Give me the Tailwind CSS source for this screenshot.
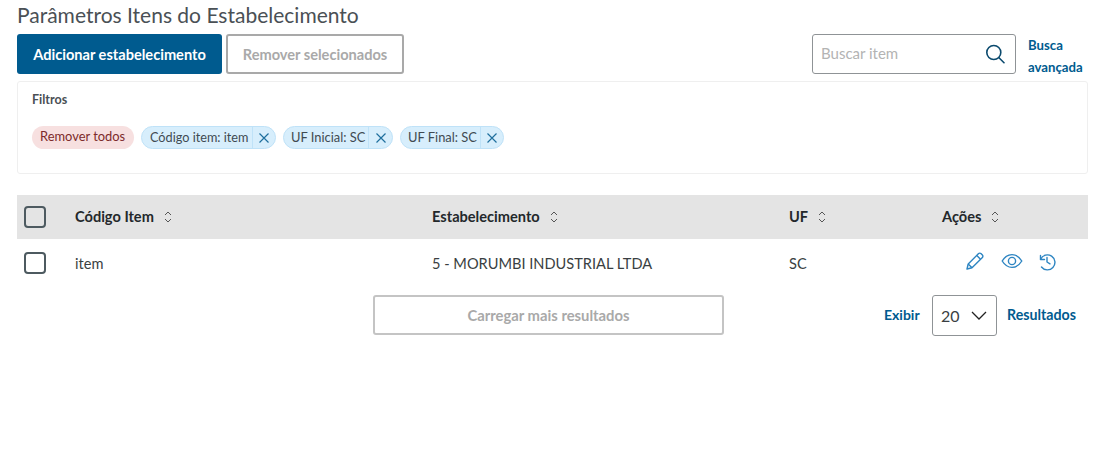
<!DOCTYPE html>
<html lang="pt-BR">
<head>
<meta charset="utf-8">
<script src="https://cdn.jsdelivr.net/npm/@tailwindcss/browser@4"></script>
<title>Parâmetros</title>
</head>
<body class="bg-white font-['Lato','Noto_Sans',sans-serif] text-[#3a3f42]">
<div class="w-[1093px] h-[465px] overflow-hidden pl-[17px] pr-[5px] pt-[2px]">
  <h1 class="h-[28px] leading-[26px] text-[21px] font-normal text-[#4a5055]">Parâmetros Itens do Estabelecimento</h1>
  <div class="flex h-[47px] items-start mt-[4px]">
    <button class="w-[205px] h-[40px] pt-[2px] rounded-[3px] bg-[#005b8f] text-white text-[14.6px] font-bold">Adicionar estabelecimento</button>
    <button class="ml-[4px] w-[178px] h-[40px] pt-[2px] rounded-[3px] border-2 border-[#a9a9a9] text-[#a9a9a9] text-[14.6px] font-bold">Remover selecionados</button>
    <div class="ml-[408px] w-[204px] h-[40px] rounded-[3px] border border-[#8f9396] flex items-center justify-between pl-[8px] pr-[10px]">
      <span class="text-[15px] text-[#b3b3b3] -mt-[1px]">Buscar item</span>
      <svg class="w-[20px] h-[20px]" viewBox="0 0 20 20" fill="none" stroke="#0b4a6e" stroke-width="1.6"><circle cx="8.8" cy="8.5" r="7"/><path d="M14 13.7l5 5" stroke-linecap="round"/></svg>
    </div>
    <div class="w-[60px] ml-[12px] text-[13.2px] font-bold text-[#005b8f] leading-[22px]">Busca<br>avançada</div>
  </div>
  <section class="w-[1071px] h-[93px] border border-[#efefef] rounded-[3px] px-[14px]">
    <div class="text-[12.5px] font-bold text-[#4a5055] h-[18px] leading-[18px] mt-[9px]">Filtros</div>
    <div class="flex items-center mt-[17px] text-[12.9px]">
      <span class="w-[102px] h-[23px] leading-[21px] px-[8px] rounded-full bg-[#f7e0e0] text-[#7d2b2b] whitespace-nowrap">Remover todos</span>
      <span class="ml-[7px] w-[135px] h-[23px] flex rounded-full bg-[#d7eefc] border border-[#bfe2f8] text-[#3f4a52]"><span class="flex-1 pl-[8px] leading-[20px] whitespace-nowrap text-[12.7px]">Código item: item</span><span class="w-[23px] border-l border-[#bfe2f8] flex items-center justify-center"><svg class="w-[12px] h-[12px]" viewBox="0 0 12 12" stroke="#1f6f9e" stroke-width="1.2" fill="none"><path d="M1.5 1.5l9 9M10.5 1.5l-9 9"/></svg></span></span>
      <span class="ml-[7px] w-[110px] h-[23px] flex rounded-full bg-[#d7eefc] border border-[#bfe2f8] text-[#3f4a52]"><span class="flex-1 pl-[7px] leading-[20px] whitespace-nowrap">UF Inicial: SC</span><span class="w-[24px] border-l border-[#bfe2f8] flex items-center justify-center"><svg class="w-[12px] h-[12px]" viewBox="0 0 12 12" stroke="#1f6f9e" stroke-width="1.2" fill="none"><path d="M1.5 1.5l9 9M10.5 1.5l-9 9"/></svg></span></span>
      <span class="ml-[7px] w-[104px] h-[23px] flex rounded-full bg-[#d7eefc] border border-[#bfe2f8] text-[#3f4a52]"><span class="flex-1 pl-[7px] leading-[20px] whitespace-nowrap">UF Final: SC</span><span class="w-[23px] border-l border-[#bfe2f8] flex items-center justify-center"><svg class="w-[12px] h-[12px]" viewBox="0 0 12 12" stroke="#1f6f9e" stroke-width="1.2" fill="none"><path d="M1.5 1.5l9 9M10.5 1.5l-9 9"/></svg></span></span>
    </div>
  </section>
  <div class="w-[1071px] mt-[21px]">
    <div class="h-[44px] bg-[#e4e4e4] flex items-center text-[14.6px] font-bold text-[#23282b]">
      <span class="w-[58px] pl-[7px]"><span class="block w-[22px] h-[22px] rounded-[4px] border-2 border-[#4d5a60]"></span></span>
      <span class="w-[357px] flex items-center gap-[10px]">Código Item <svg class="w-[8px] h-[12px]" viewBox="0 0 8 12" fill="none" stroke="#555" stroke-width="1"><path d="M1 4l3-3 3 3M1 8l3 3 3-3"/></svg></span>
      <span class="w-[357px] flex items-center gap-[10px]">Estabelecimento <svg class="w-[8px] h-[12px]" viewBox="0 0 8 12" fill="none" stroke="#555" stroke-width="1"><path d="M1 4l3-3 3 3M1 8l3 3 3-3"/></svg></span>
      <span class="w-[153px] flex items-center gap-[10px]">UF <svg class="w-[8px] h-[12px]" viewBox="0 0 8 12" fill="none" stroke="#555" stroke-width="1"><path d="M1 4l3-3 3 3M1 8l3 3 3-3"/></svg></span>
      <span class="flex items-center gap-[10px]">Ações <svg class="w-[8px] h-[12px]" viewBox="0 0 8 12" fill="none" stroke="#555" stroke-width="1"><path d="M1 4l3-3 3 3M1 8l3 3 3-3"/></svg></span>
    </div>
    <div class="h-[47px] flex items-center text-[14.6px] text-[#3a3f42]">
      <span class="w-[58px] pl-[7px]"><span class="block w-[22px] h-[22px] rounded-[4px] border-2 border-[#4d5a60]"></span></span>
      <span class="w-[357px] pt-[2px]">item</span>
      <span class="w-[357px] pt-[2px]">5 - MORUMBI INDUSTRIAL LTDA</span>
      <span class="w-[177px] pt-[2px]">SC</span>
      <span class="flex items-center gap-[16px] -ml-[1px] pb-[3px]">
        <svg class="w-[20px] h-[20px]" viewBox="0 0 20 20" fill="none" stroke="#2d85c2" stroke-width="1.4" stroke-linejoin="round"><path d="M2 18l1.2-5L13.6 2.6a1.6 1.6 0 0 1 2.3 0l1.5 1.5a1.6 1.6 0 0 1 0 2.3L7 16.8z"/><path d="M11.8 4.5l3.7 3.7M3.2 13L7 16.8"/></svg>
        <svg class="w-[22px] h-[16px]" viewBox="0 0 22 16" fill="none" stroke="#2d85c2" stroke-width="1.4"><path d="M1.2 8C4 3.5 7.5 1.6 11 1.6S18 3.5 20.8 8C18 12.5 14.500 14.400 11 14.400S4 12.500 1.200 8z"/><circle cx="11" cy="8" r="3.600"/></svg>
        <svg class="w-[19px] h-[19px] -ml-[2px]" viewBox="0 0 19 19" fill="none" stroke="#2d85c2" stroke-width="1.400" stroke-linecap="round" stroke-linejoin="round"><path d="M3.500 3.500v4h4"/><path d="M3.600 7.300A7.500 7.500 0 1 1 4.500 15"/><path d="M10 5.500v4.500l3 1.800"/></svg>
      </span>
    </div>
    <div class="flex items-start mt-[9px]">
      <button class="ml-[356px] w-[351px] h-[40px] rounded-[3px] border-2 border-[#c4c4c4] text-[#a9a9a9] text-[14.8px] font-bold">Carregar mais resultados</button>
      <span class="ml-[160px] w-[48px] mt-[9px] text-[14px] font-bold text-[#005b8f]">Exibir</span>
      <div class="w-[65px] h-[41px] rounded-[3px] border border-[#8f9396] flex items-center justify-between pl-[8px] pr-[9px] text-[16px] text-[#3a3f42]">20
        <svg class="w-[16px] h-[9px]" viewBox="0 0 16 9" fill="none" stroke="#222" stroke-width="1.300"><path d="M1 1l7 7 7-7"/></svg>
      </div>
      <span class="ml-[10px] mt-[9px] text-[14.2px] font-bold text-[#005b8f]">Resultados</span>
    </div>
  </div>
</div>
</body>
</html>
